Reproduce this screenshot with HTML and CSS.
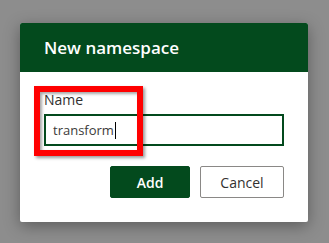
FILE: index.html
```html
<!DOCTYPE html>
<html lang="en">
<head>
  <meta charset="UTF-8">
  <title>New namespace</title>
  <link rel="stylesheet" href="styles.css">
</head>
<body>
  <div class="dialog">
    <div class="dialog-header">New namespace</div>
    <div class="dialog-body">
      <div class="field">
        <label class="field-label">Name</label>
        <div class="text-input">transform<span class="caret"></span></div>
        <div class="highlight"></div>
      </div>
      <div class="actions">
        <button class="btn btn-primary">Add</button>
        <button class="btn">Cancel</button>
      </div>
    </div>
  </div>
</body>
</html>
```

FILE: styles.css
```css
body {
  margin: 0;
  background-color: #8d8d8d;
  font-family: "Open Sans", "Noto Sans", sans-serif;
  color: #323130;
  height: 243px;
  overflow: hidden;
}

.dialog {
  margin: 23px 0 0 20px;
  width: 288px;
  background-color: #ffffff;
  border-radius: 2px;
  box-shadow: 0 4px 16px rgba(0, 0, 0, 0.35);
}

.dialog-header {
  height: 49px;
  background-color: #034a1d;
  color: #ffffff;
  font-size: 17px;
  font-weight: 600;
  padding-left: 24px;
  line-height: 49px;
  border-radius: 2px 2px 0 0;
}

.dialog-body {
  padding: 18px 24px 24px;
}

.field {
  position: relative;
}

.field-label {
  display: block;
  font-size: 14px;
  line-height: 19px;
  margin-bottom: 5px;
}

.text-input {
  height: 28px;
  border: 2px solid #034a1d;
  padding-left: 7px;
  font-size: 13px;
  line-height: 28px;
  color: #3b3a39;
}

.caret {
  display: inline-block;
  width: 1px;
  height: 17px;
  background-color: #000;
  vertical-align: -4px;
  margin-left: 1px;
}

.highlight {
  position: absolute;
  left: -10px;
  top: -4px;
  width: 97px;
  height: 58px;
  border: 6px solid #ff0000;
  box-shadow: 2px 2px 3px rgba(0, 0, 0, 0.4), inset 2px 2px 3px rgba(0, 0, 0, 0.35);
}

.actions {
  display: flex;
  justify-content: flex-end;
  gap: 10px;
  margin-top: 20px;
}

.btn {
  height: 32px;
  width: 84px;
  background-color: #ffffff;
  border: 1px solid #8a8886;
  border-radius: 2px;
  font-family: inherit;
  font-size: 14px;
  color: #323130;
}

.btn-primary {
  width: 80px;
  background-color: #034a1d;
  border-color: #034a1d;
  color: #ffffff;
  font-weight: 600;
}
```
